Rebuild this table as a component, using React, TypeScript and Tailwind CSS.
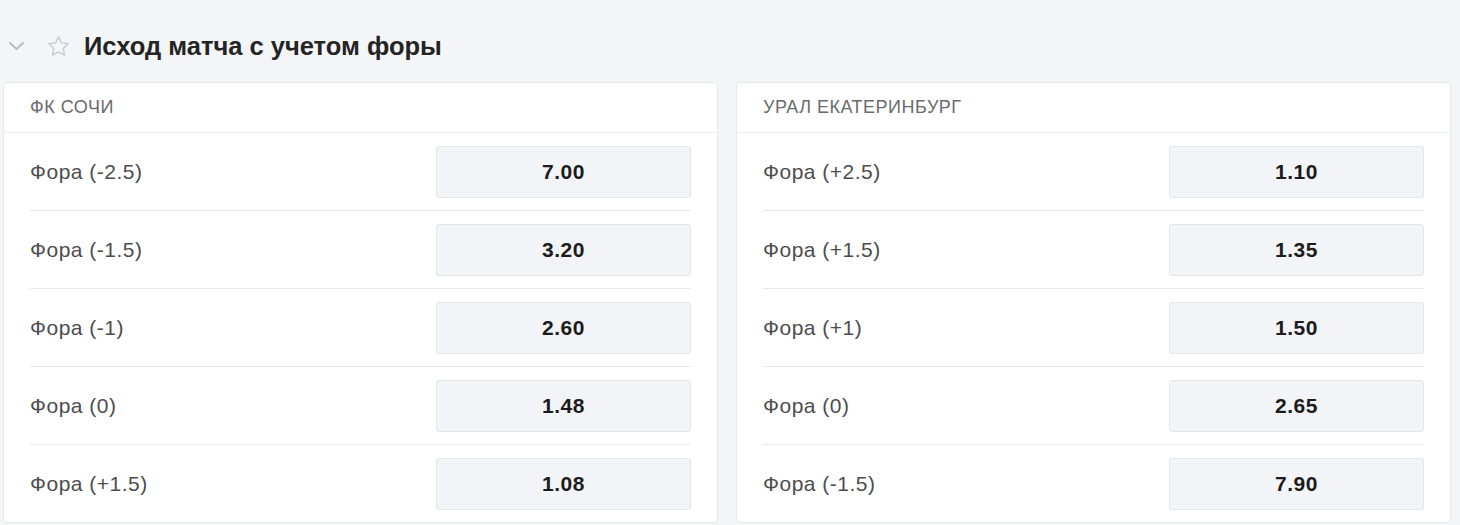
const markets = [
  {
    team: "ФК СОЧИ",
    rows: [
      ["Фора (-2.5)", "7.00"],
      ["Фора (-1.5)", "3.20"],
      ["Фора (-1)", "2.60"],
      ["Фора (0)", "1.48"],
      ["Фора (+1.5)", "1.08"],
    ],
  },
  {
    team: "УРАЛ ЕКАТЕРИНБУРГ",
    rows: [
      ["Фора (+2.5)", "1.10"],
      ["Фора (+1.5)", "1.35"],
      ["Фора (+1)", "1.50"],
      ["Фора (0)", "2.65"],
      ["Фора (-1.5)", "7.90"],
    ],
  },
];

function Chevron() {
  return (
    <svg width="17" height="10" viewBox="0 0 17 10" fill="none">
      <path d="M2 2l6.5 6L15 2" stroke="#b9bbbf" strokeWidth="2" strokeLinecap="round" strokeLinejoin="round" />
    </svg>
  );
}

function Star() {
  return (
    <svg width="23" height="22" viewBox="0 0 24 23" fill="none">
      <path
        d="M12 1.8l3.1 6.4 7 1-5.1 4.9 1.2 7-6.2-3.3-6.2 3.3 1.2-7L1.9 9.2l7-1z"
        stroke="#c9cbce"
        strokeWidth="1.5"
        strokeLinejoin="round"
      />
    </svg>
  );
}

function MarketCard({ team, rows }: { team: string; rows: string[][] }) {
  return (
    <div className="flex-1 rounded-[4px] border border-[#e7e9ec] bg-white">
      <div className="flex h-[50px] items-center border-b border-[#eceef1] px-[26px] text-[18px] tracking-[0.5px] uppercase text-[#6b6b6b]">
        {team}
      </div>
      <div className="px-[26px]">
        {rows.map(([label, odd], i) => (
          <div
            key={label}
            className={`flex h-[77px] items-center justify-between ${i > 0 ? "box-content border-t border-[#e6e8eb]" : ""}`}
          >
            <span className="text-[21px] tracking-[0.5px] text-[#4d4d4d]">{label}</span>
            <button className="flex h-[52px] w-[255px] items-center justify-center rounded-[3px] border border-[#e3e5e9] bg-[#f3f4f7] text-[21px] font-bold tracking-[0.5px] text-[#1c1c1c]">
              {odd}
            </button>
          </div>
        ))}
      </div>
    </div>
  );
}

export default function App() {
  return (
    <div className="h-[525px] w-[1460px] overflow-hidden bg-[#f4f5f7] pl-[3px] pr-[9px] font-['Liberation_Sans',Arial,sans-serif]">
      <div className="flex h-[82px] items-center pt-[10px]">
        <div className="ml-[3px] flex w-[20px] justify-center">
          <Chevron />
        </div>
        <div className="ml-[21px]">
          <Star />
        </div>
        <h2 className="ml-[14px] text-[25.5px] font-bold text-[#242424]">Исход матча с учетом форы</h2>
      </div>
      <div className="flex gap-[18px]">
        {markets.map((m) => (
          <MarketCard key={m.team} team={m.team} rows={m.rows} />
        ))}
      </div>
    </div>
  );
}
